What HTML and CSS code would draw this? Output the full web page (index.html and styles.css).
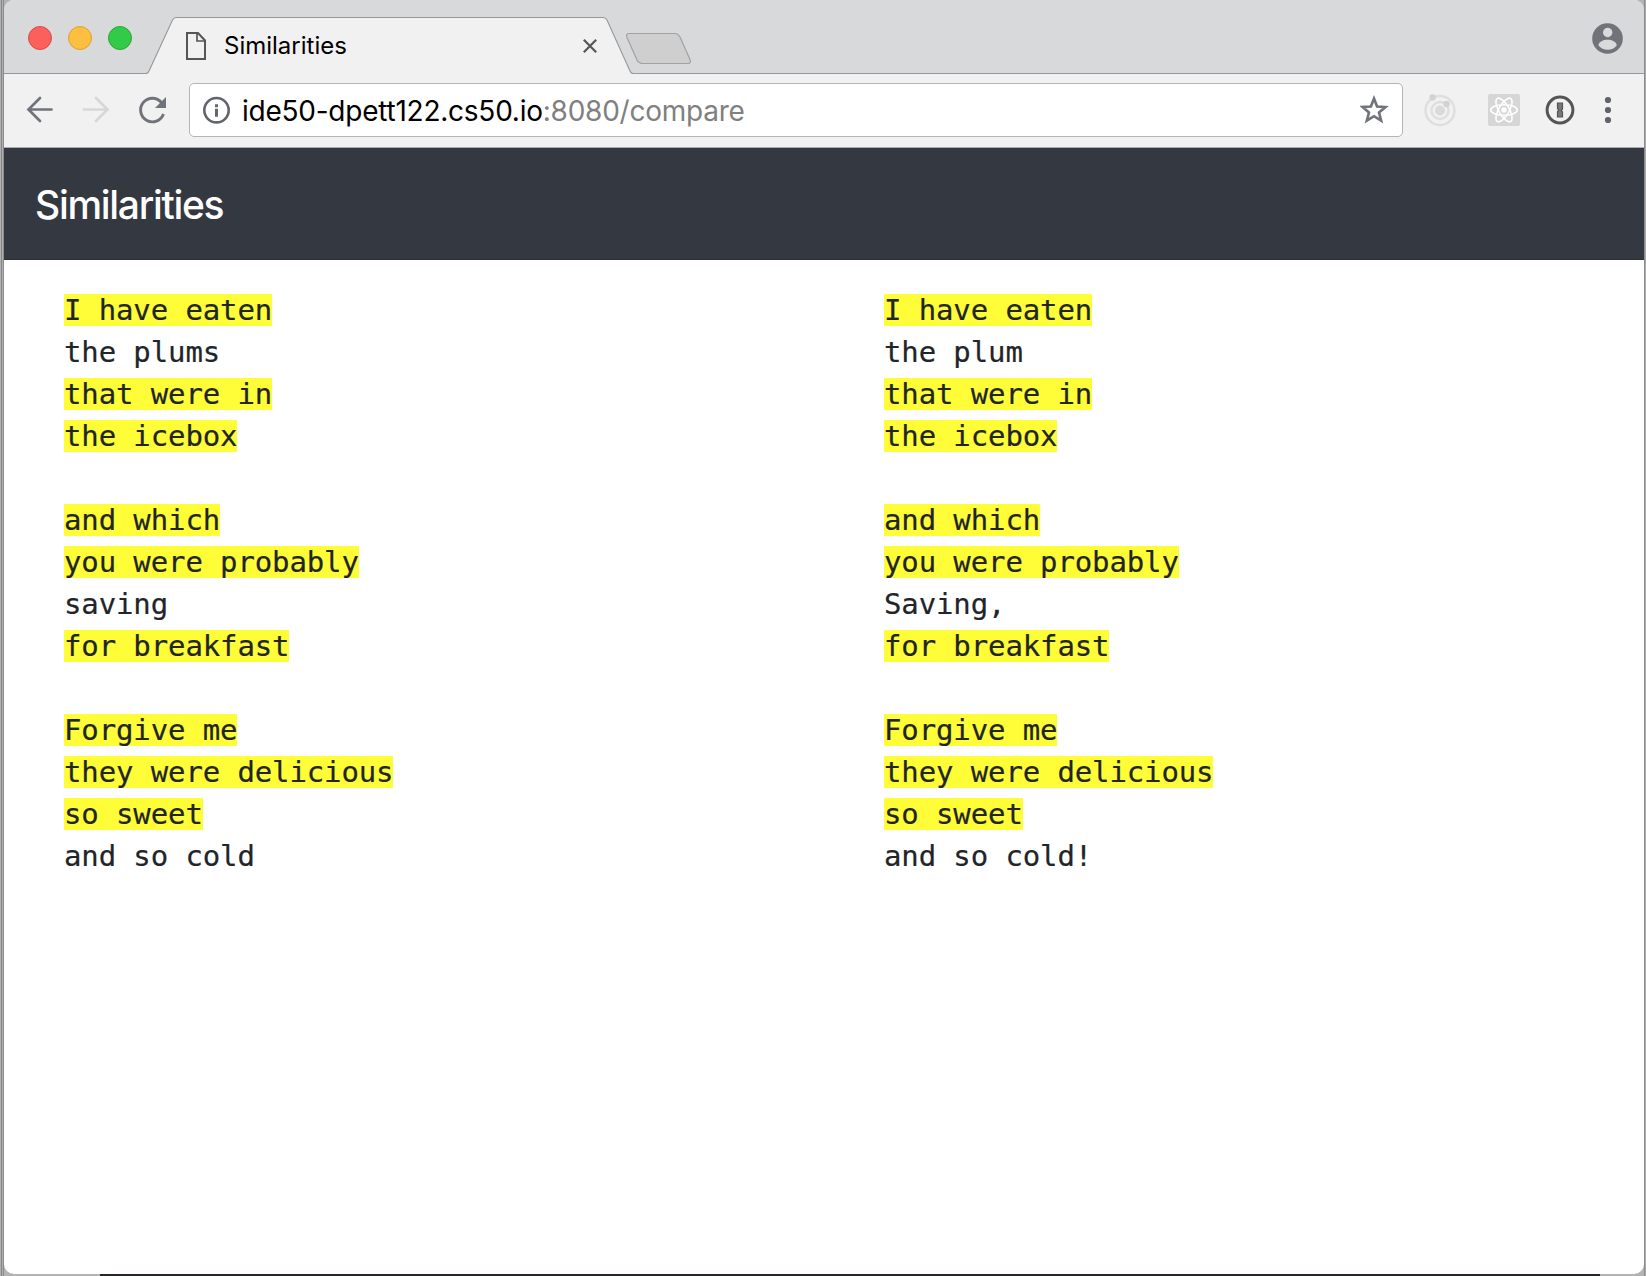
FILE: index.html
```html
<!DOCTYPE html>
<html lang="en">
<head>
<meta charset="utf-8">
<title>Similarities</title>
<link rel="stylesheet" href="styles.css">
</head>
<body>
<div class="window">
  <header class="tabstrip">
    <svg class="tab-shape" width="1640" height="74" viewBox="4 0 1640 74">
      <path d="M4 74V73.5H146Q148 73.5 149 71L172.5 20Q174 17.5 176 17.5H603Q605.5 17.5 607 20L630 71Q631 73.5 633 73.5H1644V74Z" fill="#f1f1f1"/>
      <path d="M4 73.5H146Q148 73.5 149 71L172.5 20Q174 17.5 176 17.5H603Q605.5 17.5 607 20L630 71Q631 73.5 633 73.5H1644" fill="none" stroke="#97989a" stroke-width="1.1"/>
      <path d="M629 33.500H675Q678 33.500 680 37L690 59.500Q691.500 63.500 688 63.500H642Q639 63.500 637 60L627 37.500Q625.500 33.500 629 33.500Z" fill="#cfcfcf" stroke="#a2a2a4" stroke-width="1.200"/>
    </svg>
    <div class="lights"><i class="light red"></i><i class="light amber"></i><i class="light green"></i></div>
    <div class="tab">
      <svg width="20" height="28" viewBox="0 0 20 28" fill="none" stroke="#565656" stroke-width="2"><path d="M1 1H12L19 8.500V27H1Z"/><path d="M11 1V9H19" stroke-width="1.700"/></svg>
      <span class="tab-title">Similarities</span>
      <svg width="14" height="14" viewBox="0 0 14 14" stroke="#565759" stroke-width="2.200"><path d="M.8.8 13.200 13.200M13.200.8.8 13.200"/></svg>
    </div>
    <svg class="profile" width="31" height="31" viewBox="0 0 31 31"><circle cx="15.500" cy="15.500" r="15.300" fill="#707379"/><circle cx="15.700" cy="9.500" r="4.700" fill="#d9dadc"/><path d="M6.400 22.200C7.500 14.800 23.500 14.800 24.800 22.200C20.800 28.200 10.800 28.200 6.400 22.200Z" fill="#d9dadc"/></svg>
  </header>

  <div class="toolbar">
    <svg class="buttons" width="185" height="73" viewBox="4 74 185 73" fill="none" stroke-width="2.700">
      <path d="M40 98 28.500 109.500 40 121M29 109.500H51.500" stroke="#707379" stroke-linecap="round"/>
      <path d="M96 98 107.500 109.500 96 121M107 109.500H84" stroke="#d6d7d9" stroke-linecap="round"/>
      <path d="M161.500 102.500A11.800 11.800 0 1 0 163.500 114" stroke="#707379" stroke-width="2.900"/>
      <path d="M166 97V108H155Z" fill="#707379"/>
    </svg>
    <div class="address">
      <svg width="28" height="28" viewBox="0 0 28 28"><circle cx="13.500" cy="14.200" r="12.200" fill="none" stroke="#62656b" stroke-width="2.600"/><path d="M12 8.200h3v3h-3zM12 12.700h3v8h-3z" fill="#62656b"/></svg>
      <span class="url">ide50-dpett122.cs50.io<span class="path">:8080/compare</span></span>
      <svg width="30" height="30" viewBox="0 0 30 30"><path d="M14 3.500 17.100 11.500 25.500 12 19 17.400 21.200 25.700 14 21.200 6.800 25.700 9 17.400 2.500 12 10.900 11.500Z" fill="none" stroke="#707379" stroke-width="2.600"/></svg>
    </div>
    <svg class="extensions" width="241" height="73" viewBox="1403 74 241 73" fill="none">
      <g stroke="#dedede" stroke-width="2.400"><circle cx="1440" cy="110.500" r="14.500"/><circle cx="1440" cy="110.500" r="8.500"/></g>
      <circle cx="1440" cy="110.500" r="5" fill="#dadada"/><circle cx="1432.500" cy="97.500" r="3.200" fill="#d2d2d2"/><circle cx="1446.500" cy="104" r="3.200" fill="#d2d2d2"/>
      <rect x="1488" y="94" width="32" height="32" rx="2" fill="#d6d6d6"/>
      <g stroke="#fff" stroke-width="1.600"><ellipse cx="1504" cy="110" rx="13.300" ry="5.200"/><ellipse cx="1504" cy="110" rx="13.300" ry="5.200" transform="rotate(60 1504 110)"/><ellipse cx="1504" cy="110" rx="13.300" ry="5.200" transform="rotate(120 1504 110)"/></g><circle cx="1504" cy="110" r="2.700" fill="#fff"/>
      <circle cx="1560" cy="110" r="12.900" stroke="#555" stroke-width="3"/>
      <path d="M1557.500 103H1562.500V109L1561.200 110.500 1562.500 112V117H1557.500V111.500L1558.800 110 1557.500 108.500Z" fill="#777" stroke="#555" stroke-width="1.200"/>
      <g fill="#606369"><circle cx="1608" cy="100" r="3.100"/><circle cx="1608" cy="110" r="3.100"/><circle cx="1608" cy="120" r="3.100"/></g>
    </svg>
  </div>

  <nav class="navbar"><span class="brand">Similarities</span></nav>

  <main class="compare">
<pre><mark>I have eaten</mark>
the plums
<mark>that were in</mark>
<mark>the icebox</mark>

<mark>and which</mark>
<mark>you were probably</mark>
saving
<mark>for breakfast</mark>

<mark>Forgive me</mark>
<mark>they were delicious</mark>
<mark>so sweet</mark>
and so cold</pre>
<pre><mark>I have eaten</mark>
the plum
<mark>that were in</mark>
<mark>the icebox</mark>

<mark>and which</mark>
<mark>you were probably</mark>
Saving,
<mark>for breakfast</mark>

<mark>Forgive me</mark>
<mark>they were delicious</mark>
<mark>so sweet</mark>
and so cold!</pre>
  </main>
</div>
</body>
</html>
```
FILE: styles.css
```css
* { box-sizing: border-box; }
body {
  margin: 0;
  height: 1276px;
  padding: 0 2px 2px 4px;
  overflow: hidden;
  font-family: Inter, "Liberation Sans", sans-serif;
  background:
    linear-gradient(#282628, #282628) 100px 1274px / 1500px 2px no-repeat,
    linear-gradient(90deg, #b2b2b2 0 1px, #858585 1px 2px, #b0b0b0 2px 3px, #8b8b8b 3px 4px, #b4b4b4 4px 1644px, #8b8b8b 1644px 1645px, #aaa 1645px);
}
.window {
  display: flex;
  flex-direction: column;
  height: 1274px;
  background: #fff;
  border-radius: 10px;
  overflow: hidden;
}
.tabstrip {
  position: relative;
  flex: none;
  display: flex;
  height: 74px;
  background: #d8d9db;
}
.tab-shape { position: absolute; inset: 0; }
.lights { position: relative; display: flex; gap: 16px; padding: 26px 0 0 24px; }
.light { width: 24px; height: 24px; border-radius: 50%; border: 1px solid; }
.red { background: #fc605c; border-color: #df4946; }
.amber { background: #fdbf40; border-color: #dea034; }
.green { background: #34ca49; border-color: #27aa35; }
.tab {
  position: relative;
  display: flex;
  align-items: center;
  width: 411px;
  height: 28px;
  margin: 32px 0 0 54px;
}
.tab-title { flex: 1; margin-left: 18px; font-size: 24px; line-height: 28px; color: #000; letter-spacing: 0; }
.profile { position: relative; margin: 22.500px 21px 0 auto; }
.toolbar {
  flex: none;
  display: flex;
  height: 74px;
  background: #f1f1f1;
  border-bottom: 1px solid #adadae;
}
.buttons, .extensions { flex: none; }
.address {
  flex: 1;
  display: flex;
  align-items: center;
  height: 54px;
  margin-top: 9px;
  padding: 0 12px 0 13px;
  background: #fff;
  border: 1px solid #b5b5b6;
  border-radius: 5px;
}
.url { flex: 1; margin-left: 11px; padding-top: 2px; font-size: 28px; line-height: 36px; letter-spacing: -.24px; color: #000; }
.path { color: #808080; }
.navbar {
  flex: none;
  display: flex;
  align-items: center;
  height: 112px;
  padding: 2px 31px 0;
  background: #343840;
  border-bottom: 1px solid #2b2e34;
}
.brand { font-size: 39px; font-weight: 500; line-height: 60px; letter-spacing: -1.3px; color: #fff; }
.compare { flex: 1; display: grid; grid-template-columns: 820px 820px; padding-top: 29px; }
pre {
  margin: 0;
  padding-left: 60px;
  font: 29px/42px "DejaVu Sans Mono", monospace;
  letter-spacing: -.12px;
  color: #212529;
  -webkit-text-stroke: .2px #212529;
}
mark {
  background: linear-gradient(#fffd38, #fffd38) 0 1px / 100% 32px no-repeat;
  color: inherit;
}
```
